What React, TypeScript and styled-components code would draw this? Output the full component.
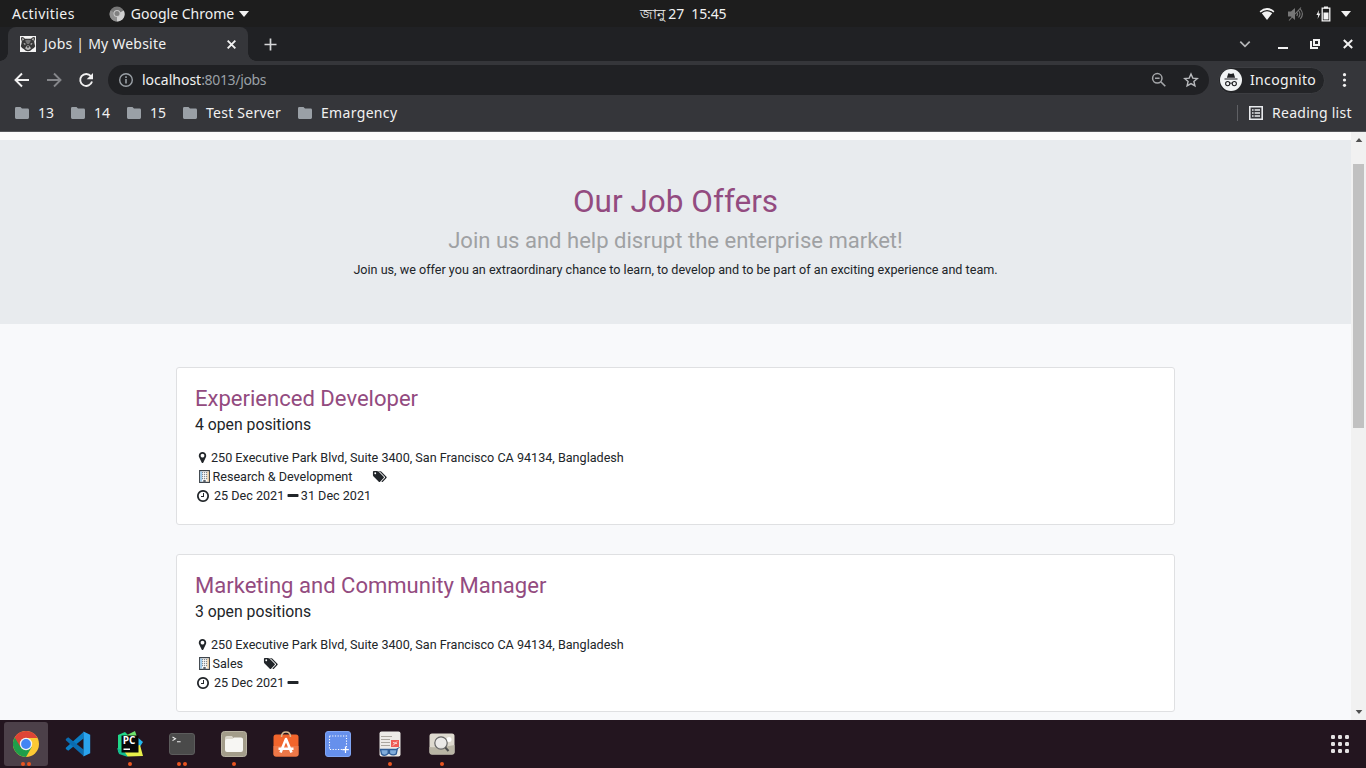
import React from "react";
import styled, { createGlobalStyle } from "styled-components";

const GlobalStyle = createGlobalStyle`
  * { box-sizing: border-box; }
  body { margin: 0; overflow: hidden; background: #202124; }
  svg { display: block; flex: none; }
`;

const Screen = styled.div`
  width: 1366px;
  height: 768px;
  display: flex;
  flex-direction: column;
  overflow: hidden;
  font-family: "Noto Sans", "Open Sans", sans-serif;
  font-size: 14px;
  color: #f1f1f1;
`;

const Label = styled.span<{ $ls?: number; $ml?: number; $size?: number; $color?: string }>`
  white-space: pre;
  line-height: 20px;
  font-size: ${(p) => p.$size ?? 14}px;
  letter-spacing: ${(p) => p.$ls ?? 0}px;
  margin-left: ${(p) => p.$ml ?? 0}px;
  color: ${(p) => p.$color ?? "inherit"};
`;

/* ---------- desktop top bar ---------- */
const TopBar = styled.header`
  height: 27px;
  flex: none;
  background: #1d1d1d;
  display: grid;
  grid-template-columns: 1fr 86px 1fr;
  align-items: center;
`;
const TopLeft = styled.div`
  display: flex;
  align-items: center;
  padding-left: 12px;
`;
const AppMenu = styled.div`
  display: flex;
  align-items: center;
  margin-left: 34px;
`;
const Clock = styled.div`
  display: flex;
  align-items: center;
`;
const TopRight = styled.div`
  display: flex;
  justify-content: flex-end;
  align-items: center;
  padding-right: 15px;
`;

/* ---------- browser ---------- */
const TabStrip = styled.div`
  height: 34px;
  flex: none;
  background: #202124;
  display: flex;
  align-items: center;
  padding-left: 8px;
`;
const Tab = styled.div`
  position: relative;
  width: 240px;
  height: 34px;
  background: #35363a;
  border-radius: 8px 8px 0 0;
  display: flex;
  align-items: center;
  padding: 0 12px;
  &::before,
  &::after {
    content: "";
    position: absolute;
    bottom: 0;
    width: 8px;
    height: 8px;
  }
  &::before {
    left: -8px;
    background: radial-gradient(circle at 0 0, transparent 7.5px, #35363a 8px);
  }
  &::after {
    right: -8px;
    background: radial-gradient(circle at 100% 0, transparent 7.5px, #35363a 8px);
  }
`;
const TabTitle = styled(Label)`
  flex: 1;
`;
const NewTab = styled.div`
  margin-left: 16px;
`;
const WindowControls = styled.div`
  margin-left: auto;
  display: flex;
  align-items: center;
  padding-right: 12px;
`;
const Toolbar = styled.div`
  height: 36px;
  flex: none;
  background: #35363a;
  display: flex;
  align-items: center;
  padding: 2px 16px 0 14px;
`;
const NavButtons = styled.div`
  display: flex;
  gap: 16px;
  width: 94px;
`;
const AddressBar = styled.div`
  flex: none;
  width: 1101px;
  height: 30px;
  border-radius: 15px;
  background: #202124;
  display: flex;
  align-items: center;
  padding: 0 10px;
`;
const AddressActions = styled.div`
  display: flex;
  gap: 16px;
  margin-left: auto;
`;
const Incognito = styled.div`
  margin-left: 9px;
  width: 107px;
  height: 27px;
  border-radius: 14px;
  border: 1px solid #3c3d41;
  background: #232427;
  display: flex;
  align-items: center;
  padding-left: 1px;
`;
const MenuDots = styled.div`
  margin-left: auto;
`;
const Bookmarks = styled.nav`
  height: 35px;
  flex: none;
  background: #35363a;
  border-bottom: 1px solid #56575b;
  display: flex;
  align-items: center;
  padding: 0 14px 3px 15px;
`;
const Bookmark = styled.div<{ $w: number }>`
  width: ${(p) => p.$w}px;
  display: flex;
  align-items: center;
`;
const ReadingList = styled.div`
  margin-left: auto;
  width: 115px;
  display: flex;
  align-items: center;
  border-left: 1px solid #5f6064;
  height: 16px;
  padding-left: 11px;
`;

/* ---------- page ---------- */
const Viewport = styled.div`
  height: 588px;
  flex: none;
  display: flex;
  overflow: hidden;
  background: #f8f9fb;
`;
const Page = styled.main`
  flex: 1;
  font-family: Roboto, sans-serif;
  color: #212529;
  border-top: 8px solid #fbfbfb;
`;
const Hero = styled.section`
  height: 184px;
  background: #e8ebee;
  display: flex;
  flex-direction: column;
  align-items: center;
  padding-top: 43px;
`;
const HeroTitle = styled.h1`
  margin: 0;
  font-size: 31.5px;
  font-weight: 400;
  line-height: 38px;
  color: #934b80;
`;
const HeroSub = styled.h3`
  margin: 2px 0 0;
  font-size: 22.05px;
  font-weight: 400;
  line-height: 36px;
  color: #9fa1a3;
`;
const HeroText = styled.p`
  margin: 1px 0 0;
  font-size: 12.6px;
  line-height: 19px;
`;
const JobList = styled.section`
  display: flex;
  flex-direction: column;
  gap: 29px;
  padding: 43px 176px 0;
`;
const Card = styled.article`
  height: 158px;
  background: #fff;
  border: 1px solid #dfe0e2;
  border-radius: 3px;
  padding: 17px 18px;
  font-size: 12.6px;
  line-height: 19px;
`;
const JobTitle = styled.h3`
  margin: 0;
  font-size: 22.05px;
  font-weight: 400;
  line-height: 27px;
  color: #934b80;
`;
const Positions = styled.h4`
  margin: 3px 0 14px;
  font-size: 15.75px;
  font-weight: 400;
  line-height: 19px;
`;
const Line = styled.div`
  height: 19px;
  display: flex;
  align-items: center;
  white-space: pre;
`;
const IconSlot = styled.span<{ $w: number; $pl: number }>`
  width: ${(p) => p.$w}px;
  padding-left: ${(p) => p.$pl}px;
  flex: none;
`;
const Scrollbar = styled.div`
  width: 15px;
  background: #f1f1f1;
  display: flex;
  flex-direction: column;
  align-items: center;
  padding: 6px 0;
`;
const Thumb = styled.div`
  width: 11px;
  height: 264px;
  background: #c1c1c1;
  margin-top: 22px;
  margin-bottom: auto;
`;

/* ---------- dock ---------- */
const Dock = styled.footer`
  flex: none;
  height: 48px;
  background: #23151f;
  display: flex;
  align-items: center;
  gap: 8px;
  padding: 0 16px 0 4px;
`;
const DockItem = styled.div<{ $active?: boolean }>`
  position: relative;
  width: 44px;
  height: 44px;
  border-radius: 3px;
  background: ${(p) => (p.$active ? "#4c4049" : "transparent")};
  display: flex;
  align-items: center;
  justify-content: center;
`;
const Dots = styled.div`
  position: absolute;
  bottom: 0;
  left: 0;
  right: 0;
  display: flex;
  justify-content: center;
  gap: 2px;
`;
const Dot = styled.i`
  width: 4px;
  height: 4px;
  border-radius: 50%;
  background: #e95420;
`;
const AppsButton = styled.div`
  margin-left: auto;
`;

const Caret = ({ w = 10, h = 6, color = "#f2f2f2", up = false }) => (
  <svg width={w} height={h} viewBox="0 0 10 6">
    <path d={up ? "M0 6h10L5 0z" : "M0 0h10L5 6z"} fill={color} />
  </svg>
);

const ChromeGray = () => (
  <svg width="16" height="16" viewBox="0 0 16 16">
    <circle cx="8" cy="8" r="7.500" fill="#777" />
    <path d="M8 8L14.800 4.500A7.500 7.500 0 0 1 8 15.500z" fill="#d0d0d0" />
    <path d="M8 8L1.500 4.500A7.500 7.500 0 0 0 8 15.500z" fill="#8f8f8f" />
    <circle cx="8" cy="7.500" r="3.500" fill="#c8c8c8" />
    <circle cx="8" cy="7.500" r="2.500" fill="#808080" />
  </svg>
);

const WifiIcon = () => (
  <svg width="16" height="14" viewBox="0 0 16 14">
    <path d="M.6 4.300Q8-2.200 15.400 4.300l-1 1.200Q8 .3 1.600 5.500z" fill="#f2f2f2" />
    <path d="M2.800 6.200Q8 2.400 13.200 6.200L8 13z" fill="#f2f2f2" />
  </svg>
);

const MutedIcon = () => (
  <svg width="16" height="16" viewBox="0 0 16 16">
    <path d="M1 5.500h3L8 2v12L4 10.500H1z" fill="#777" />
    <path d="M9.700 6q1.500 2 0 4M11.500 4.500q3 3.500 0 7M13.300 3q4.200 5 0 10M14 1.500L2 14.500" fill="none" stroke="#777" strokeWidth="1.100" />
  </svg>
);

const BatteryIcon = () => (
  <svg width="15" height="16" viewBox="0 0 15 16">
    <path d="M3 4L.4 9h1.800L1.600 13 4.400 7.500H2.600z" fill="#f2f2f2" />
    <path d="M6.200 2.200h7.600v12.600H6.200z" fill="none" stroke="#f2f2f2" strokeWidth="1.300" />
    <path d="M8 .5h4v2H8zM7.500 6.500h5v7h-5z" fill="#f2f2f2" />
  </svg>
);

const Favicon = () => (
  <svg width="16" height="16" viewBox="0 0 16 16">
    <path d="M0 0h16v16H0z" fill="#f4f4f4" />
    <path d="M1.200 1.200Q3.500.6 5 2.800h6Q12.500.6 14.800 1.200q.8 2-.6 4.200.3 2 1 4.800-1 2.300-3 2.800Q10.500 15.200 8 15.200T3.800 13Q1.800 12.500.8 10.200q.7-2.800 1-4.800Q.4 3.200 1.200 1.200z" fill="#383838" />
    <path d="M2.200 2.300q1.300 0 1.800 1L2.600 4.800zM13.800 2.300q-1.300 0-1.800 1l1.400 1.500z" fill="#ddd" />
    <path d="M5 4.500Q8 3 11 4.500L9 8H7z" fill="#777" />
    <path d="M5 12.300L7 9.500h2l2 2.800Q9.500 14 8 14t-3-1.700z" fill="#b8b8b8" />
    <path d="M6.700 10.300h2.600L8 12.300z" fill="#222" />
    <path d="M3.500 7l2.500 1-1.500.8zM12.500 7L10 8l1.500.8z" fill="#ddd" />
  </svg>
);

const CloseX = ({ s = 8, w = 1.7 }) => (
  <svg width={s} height={s} viewBox="0 0 8 8">
    <path d="M.6.6l6.800 6.800M7.400.6L.6 7.400" stroke="#f1f1f1" strokeWidth={w} />
  </svg>
);

const NavArrow = ({ color, flip = false }: { color: string; flip?: boolean }) => (
  <svg width="16" height="16" viewBox="0 0 16 16">
    <path
      d="M15 8H2M8 1.500L1.500 8 8 14.500"
      transform={flip ? "translate(16 0) scale(-1 1)" : undefined}
      fill="none"
      stroke={color}
      strokeWidth="1.900"
    />
  </svg>
);

const Reload = () => (
  <svg width="16" height="16" viewBox="0 0 16 16">
    <path d="M12.900 4.200A6 6 0 1 0 14 9.500" fill="none" stroke="#f1f1f1" strokeWidth="1.900" />
    <path d="M15 1v6.300H8.700z" fill="#f1f1f1" />
  </svg>
);

const InfoIcon = () => (
  <svg width="16" height="16" viewBox="0 0 16 16">
    <circle cx="8" cy="8" r="6.300" fill="none" stroke="#9aa0a6" strokeWidth="1.400" />
    <path d="M7.200 7h1.600v4.500H7.200zM7.200 4.300h1.600v1.600H7.200z" fill="#9aa0a6" />
  </svg>
);

const ZoomOut = () => (
  <svg width="16" height="16" viewBox="0 0 16 16">
    <circle cx="6.300" cy="6.300" r="4.700" fill="none" stroke="#a4a6a9" strokeWidth="1.500" />
    <path d="M4 6.300h4.600M9.800 9.800l4.500 4.500" stroke="#a4a6a9" strokeWidth="1.600" />
  </svg>
);

const Star = () => (
  <svg width="16" height="16" viewBox="0 0 16 16">
    <path d="M8 2l1.800 4.100 4.500.4-3.400 3 1 4.400L8 11.600l-3.900 2.300 1-4.400-3.400-3 4.500-.4z" fill="none" stroke="#b9bbbe" strokeWidth="1.400" />
  </svg>
);

const IncognitoIcon = () => (
  <svg width="22" height="22" viewBox="0 0 22 22">
    <circle cx="11" cy="11" r="11" fill="#f1f3f4" />
    <path d="M8.300 4.300L11 5l2.700-.7 1.400 4.400H6.900zM4.500 9.400h13v1.100h-13z" fill="#202124" />
    <g fill="none" stroke="#202124" strokeWidth="1.100">
      <circle cx="7.700" cy="14.600" r="2.100" />
      <circle cx="14.300" cy="14.600" r="2.100" />
      <path d="M9.800 14.400q1.200-.8 2.400 0" />
    </g>
  </svg>
);

const Folder = () => (
  <svg width="14" height="12" viewBox="0 0 14 12">
    <path d="M1.300 0h4.200L7 1.600h5.700Q14 1.600 14 3v7.600Q14 12 12.700 12H1.300Q0 12 0 10.600V1.400Q0 0 1.300 0z" fill="#9aa0a6" />
  </svg>
);

const ListIcon = () => (
  <svg width="14" height="14" viewBox="0 0 14 14">
    <path d="M.8.8h12.400v12.400H.8z" fill="none" stroke="#e8eaed" strokeWidth="1.600" />
    <path d="M3 3.200h1.600v1.600H3zM5.600 3.200H11v1.600H5.600zM3 6.200h1.600v1.600H3zM5.600 6.200H11v1.600H5.600zM3 9.200h1.600v1.600H3zM5.600 9.200H11v1.600H5.600z" fill="#e8eaed" />
  </svg>
);

const GLYPHS = {
  marker:
    "M1152 640q0-106-75-181t-181-75-181 75-75 181 75 181 181 75 181-75 75-181zm256 0q0 109-33 179l-364 774q-16 33-47.500 52t-67.500 19-67.500-19-46.500-52l-365-774q-33-70-33-179 0-212 150-362t362-150 362 150 150 362z",
  clock:
    "M1024 544v448q0 14-9 23t-23 9h-320q-14 0-23-9t-9-23v-64q0-14 9-23t23-9h224v-352q0-14 9-23t23-9h64q14 0 23 9t9 23zm416 352q0-148-73-273t-198-198-273-73-273 73-198 198-73 273 73 273 198 198 273 73 273-73 198-198 73-273zm224 0q0 209-103 385.500t-279.500 279.500-385.500 103-385.500-103-279.500-279.500-103-385.500 103-385.500 279.500-279.500 385.500-103 385.500 103 279.500 279.500 103 385.500z",
  minus:
    "M1600 736v192q0 40-28 68t-68 28h-1216q-40 0-68-28t-28-68v-192q0-40 28-68t68-28h1216q40 0 68 28t28 68z",
  tags:
    "M576 448q0-53-37.500-90.500t-90.500-37.500-90.500 37.500-37.500 90.500 37.500 90.500 90.500 37.500 90.500-37.500 37.500-90.500zm1067 576q0 53-37 90l-491 492q-39 37-91 37-53 0-90-37l-715-716q-38-37-64.500-101t-26.500-117v-416q0-52 38-90t90-38h416q53 0 117 26.500t102 64.500l715 714q37 39 37 91zm384 0q0 53-37 90l-491 492q-39 37-91 37-36 0-59-14t-53-45l470-470q37-37 37-90 0-52-37-91l-715-714q-38-38-102-64.500t-117-26.500h224q53 0 117 26.500t102 64.500l715 714q37 39 37 91z",
};

const Glyph = ({ name, size = 14 }: { name: keyof typeof GLYPHS; size?: number }) => (
  <svg width={name === "tags" ? (size * 2048) / 1792 : size} height={size} viewBox={name === "tags" ? "0 0 2048 1792" : "0 0 1792 1792"}>
    <path d={GLYPHS[name]} fill="#212529" />
  </svg>
);

const Building = () => (
  <svg width="11" height="13" viewBox="0 0 11 13">
    <path d="M.6.6h9.800v11.800H.6z" fill="#fff" stroke="#3d444b" strokeWidth="1.100" />
    <path d="M1.500 1.500h1.200v10H1.500z" fill="#75b7e8" />
    <path d="M8.600 1.500h1v10h-1z" fill="#f3c078" />
    <path d="M3 2.700h5.400M3 4.700h5.400M3 6.700h5.400M3 8.700h5.400" stroke="#666f78" strokeWidth="1" strokeDasharray="1.200 .8" />
    <path d="M4.300 10h2.400v2.400H4.300z" fill="#59616a" />
  </svg>
);

const ChromeLogo = () => (
  <svg width="26" height="26" viewBox="0 0 26 26">
    <circle cx="13" cy="13" r="13" fill="#fcc934" />
    <path d="M13 13L1.740 6.500A13 13 0 0 0 13 26l5.600-9.800z" fill="#1e9e4a" />
    <path d="M13 7h11.500A13 13 0 0 0 1.740 6.500L7.500 16z" fill="#dd4436" />
    <circle cx="13" cy="13" r="6.200" fill="#f3f3f3" />
    <circle cx="13" cy="13" r="4.900" fill="#4285f4" />
  </svg>
);

const CodeLogo = () => (
  <svg width="26" height="26" viewBox="0 0 26 26">
    <path d="M18.500 7.500L3.200 19.700.8 18v-1.200L18.800.8z" fill="#0a7dc4" />
    <path d="M18.500 18.500L3.200 6.300.8 8v1.200L18.800 25.200z" fill="#0b6cb0" />
    <path d="M18.500.5L25.200 3.700v18.600l-6.700 3.200z" fill="#2aa4ee" />
  </svg>
);

const PyCharmLogo = () => (
  <svg width="28" height="28" viewBox="0 0 28 28">
    <path d="M2 5l7-3 5 5-4 18-8-3z" fill="#21d789" />
    <path d="M13 4l6-3 2 6-6 8-8-7z" fill="#6de36b" />
    <path d="M20 6l7 6-4 6-5-4z" fill="#23b7ee" />
    <path d="M24 15l3 11-15 .5-7-3 7-6z" fill="#e8ef4a" />
    <path d="M1 18l7 3 4 6-9-3z" fill="#13bd8f" />
    <path d="M5.500 5.500h17v17h-17z" fill="#080808" />
    <text x="6.800" y="14.300" fontFamily="Open Sans" fontWeight="700" fontSize="10" fill="#fff">PC</text>
    <path d="M7.500 18.500h6.500v1.500H7.500z" fill="#fff" />
  </svg>
);

const TerminalLogo = () => (
  <svg width="26" height="22" viewBox="0 0 26 22">
    <rect x=".5" y=".5" width="25" height="21" rx="2.500" fill="#4a4a4a" stroke="#5c5c5c" />
    <path d="M3.500 4l3 1.800-3 1.800M8 8.700h3.600" fill="none" stroke="#eee" strokeWidth="1.100" />
  </svg>
);

const FilesLogo = () => (
  <svg width="26" height="26" viewBox="0 0 26 26">
    <rect x=".5" y=".5" width="25" height="25" rx="3" fill="#a39c8a" stroke="#b9b3a3" />
    <path d="M4 7q0-2 2-2h5l1.500 2H20q2 0 2 2v4H4z" fill="#dad6cb" />
    <path d="M4 10q0-2 2-2h5.500L13 6.500h7q2 0 2 2V19q0 2-2 2H6q-2 0-2-2z" fill="#f7f6f3" />
  </svg>
);

const SoftwareLogo = () => (
  <svg width="26" height="26" viewBox="0 0 26 26">
    <rect x=".5" y="3.500" width="25" height="22" rx="2.500" fill="#f1652c" />
    <path d="M.5 15h25v8q0 2.500-2.500 2.500H3Q.5 25.500.5 23z" fill="#ee7848" />
    <path d="M8.500 6Q8.500 1 13 1t4.500 5" fill="none" stroke="#d7b98f" strokeWidth="1.500" />
    <path d="M7.500 21.500L13 8l5.500 13.500M5.500 17.800h15" fill="none" stroke="#fff" strokeWidth="2.600" strokeLinejoin="round" />
  </svg>
);

const ScreenshotLogo = () => (
  <svg width="26" height="26" viewBox="0 0 26 26">
    <rect x=".5" y=".5" width="25" height="25" rx="2.500" fill="#6690ec" stroke="#80a5f4" />
    <path d="M4.500 5h17v13.500h-17z" fill="none" stroke="#fff" strokeWidth="1.100" strokeDasharray="1.200 1.500" />
    <path d="M20.500 15.500v6.500M17.300 18.700h6.500" stroke="#fff" strokeWidth="1.200" />
  </svg>
);

const DocumentLogo = () => (
  <svg width="22" height="26" viewBox="0 0 22 26">
    <rect x=".5" y=".5" width="21" height="25" rx="2" fill="#eceae7" />
    <path d="M2 5.500h11M2 8.500h9M2 11.500h9M2 14.500h9" stroke="#aaa69f" strokeWidth="1" />
    <path d="M12 9h8v7h-8z" fill="#ee5b55" />
    <path d="M14 14.500l4-4M14 11.500l4 1" stroke="#fff" strokeWidth=".8" />
    <path d="M1.500 18.500h7.700v4Q5.500 26 2.500 23zM10.500 18.500h7.700l-1 4.500q-3 2-6.700-.5z" fill="#80addc" stroke="#315f98" strokeWidth="1.300" />
    <path d="M17.500 18l3-1.500" stroke="#315f98" />
  </svg>
);

const ViewerLogo = () => (
  <svg width="26" height="24" viewBox="0 0 26 24">
    <rect x=".5" y="1.500" width="25" height="21" rx="2.500" fill="#dedacf" />
    <path d="M.5 15q12 1 25-2v7q0 2.500-2.500 2.500H3Q.5 22.500.5 20z" fill="#b9b5a5" />
    <circle cx="20" cy="7.500" r="2.500" fill="#fff" />
    <circle cx="12" cy="11" r="6.200" fill="#eee" fillOpacity=".8" stroke="#666" strokeWidth="1.200" />
    <path d="M16.300 15.500l3.200 3.500" stroke="#4e4e4e" strokeWidth="2" />
  </svg>
);

const AppsGrid = () => (
  <svg width="20" height="20" viewBox="0 0 20 20">
    {[1, 8, 15].map((y) => [1, 8, 15].map((x) => <rect key={`${x}-${y}`} x={x} y={y} width="4" height="4" rx="1.200" fill="#e4e2e3" />))}
  </svg>
);

const bookmarks = [
  { name: "13", w: 56, ls: 0 },
  { name: "14", w: 56, ls: 0 },
  { name: "15", w: 56, ls: 0 },
  { name: "Test Server", w: 115, ls: 0.25 },
  { name: "Emargency", w: 110, ls: 0.33 },
];

const jobs = [
  { title: "Experienced Developer", count: 4, team: "Research & Development", end: "31 Dec 2021" },
  { title: "Marketing and Community Manager", count: 3, team: "Sales", end: "" },
];

const dock = [
  { Logo: ChromeLogo, dots: 2 },
  { Logo: CodeLogo, dots: 0 },
  { Logo: PyCharmLogo, dots: 1 },
  { Logo: TerminalLogo, dots: 2 },
  { Logo: FilesLogo, dots: 1 },
  { Logo: SoftwareLogo, dots: 0 },
  { Logo: ScreenshotLogo, dots: 0 },
  { Logo: DocumentLogo, dots: 1 },
  { Logo: ViewerLogo, dots: 1 },
];

const JobCard = ({ job }: { job: (typeof jobs)[number] }) => (
  <Card>
    <JobTitle>{job.title}</JobTitle>
    <Positions>{job.count} open positions</Positions>
    <Line>
      <IconSlot $w={16} $pl={1}><Glyph name="marker" size={13} /></IconSlot>
      250 Executive Park Blvd, Suite 3400, San Francisco CA 94134, Bangladesh
    </Line>
    <Line>
      <IconSlot $w={17.5} $pl={4}><Building /></IconSlot>
      {job.team}
      <IconSlot $w={40} $pl={20}><Glyph name="tags" size={13} /></IconSlot>
    </Line>
    <Line>
      <IconSlot $w={19} $pl={1}><Glyph name="clock" size={14} /></IconSlot>
      25 Dec 2021
      <IconSlot $w={16.6} $pl={2}><Glyph name="minus" size={14} /></IconSlot>
      {job.end}
    </Line>
  </Card>
);

export default function App() {
  return (
    <Screen>
      <GlobalStyle />
      <TopBar>
        <TopLeft>
          <Label $ls={0.45}>Activities</Label>
          <AppMenu>
            <ChromeGray />
            <Label $ml={6}>Google Chrome</Label>
            <Label $ml={5}><Caret /></Label>
          </AppMenu>
        </TopLeft>
        <Clock><Label $ls={-0.1}>জানু 27  15:45</Label></Clock>
        <TopRight>
          <WifiIcon />
          <Label $ml={12}><MutedIcon /></Label>
          <Label $ml={13}><BatteryIcon /></Label>
          <Label $ml={10}><Caret /></Label>
        </TopRight>
      </TopBar>
      <TabStrip>
        <Tab>
          <Favicon />
          <TabTitle $ml={8} $ls={0.22}>Jobs | My Website</TabTitle>
          <CloseX s={9} />
        </Tab>
        <NewTab>
          <svg width="13" height="13" viewBox="0 0 13 13"><path d="M6.500.5v12M.5 6.500h12" stroke="#d5d6d8" strokeWidth="1.700" /></svg>
        </NewTab>
        <WindowControls>
          <svg width="130" height="14" viewBox="0 0 130 14">
            <g fill="none" stroke="#f1f1f1">
              <path d="M16.300 4.700L21 9.400l4.700-4.700" stroke="#b5b6b8" strokeWidth="1.700" />
              <path d="M54 11h10" strokeWidth="2" />
              <path d="M90 3h5v5h-5zM87 4v7h7" strokeWidth="2" />
              <path d="M119.800 3l8.400 8M128.200 3l-8.400 8" strokeWidth="2" />
            </g>
          </svg>
        </WindowControls>
      </TabStrip>
      <Toolbar>
        <NavButtons>
          <NavArrow color="#f1f1f1" />
          <NavArrow color="#85868a" flip />
          <Reload />
        </NavButtons>
        <AddressBar>
          <InfoIcon />
          <Label $ml={8}>localhost</Label>
          <Label $color="#9aa0a6" $ls={-0.33}>:8013/jobs</Label>
          <AddressActions><ZoomOut /><Star /></AddressActions>
        </AddressBar>
        <Incognito>
          <IncognitoIcon />
          <Label $ml={8} $ls={0.35}>Incognito</Label>
        </Incognito>
        <MenuDots>
          <svg width="13" height="14" viewBox="0 0 13 14">
            <g fill="#f1f1f1">
              <circle cx="7.500" cy="1.700" r="1.600" />
              <circle cx="7.500" cy="7" r="1.600" />
              <circle cx="7.500" cy="12.300" r="1.600" />
            </g>
          </svg>
        </MenuDots>
      </Toolbar>
      <Bookmarks>
        {bookmarks.map((b) => (
          <Bookmark key={b.name} $w={b.w}>
            <Folder />
            <Label $ml={9} $ls={b.ls}>{b.name}</Label>
          </Bookmark>
        ))}
        <ReadingList>
          <ListIcon />
          <Label $ml={9} $ls={0.27}>Reading list</Label>
        </ReadingList>
      </Bookmarks>
      <Viewport>
        <Page>
          <Hero>
            <HeroTitle>Our Job Offers</HeroTitle>
            <HeroSub>Join us and help disrupt the enterprise market!</HeroSub>
            <HeroText>Join us, we offer you an extraordinary chance to learn, to develop and to be part of an exciting experience and team.</HeroText>
          </Hero>
          <JobList>
            {jobs.map((job) => <JobCard key={job.title} job={job} />)}
          </JobList>
        </Page>
        <Scrollbar>
          <Caret w={8} h={4} color="#505050" up />
          <Thumb />
          <Caret w={8} h={4} color="#505050" />
        </Scrollbar>
      </Viewport>
      <Dock>
        {dock.map(({ Logo, dots }, i) => (
          <DockItem key={i} $active={i === 0}>
            <Logo />
            <Dots>{Array.from({ length: dots }, (_, k) => <Dot key={k} />)}</Dots>
          </DockItem>
        ))}
        <AppsButton><AppsGrid /></AppsButton>
      </Dock>
    </Screen>
  );
}
